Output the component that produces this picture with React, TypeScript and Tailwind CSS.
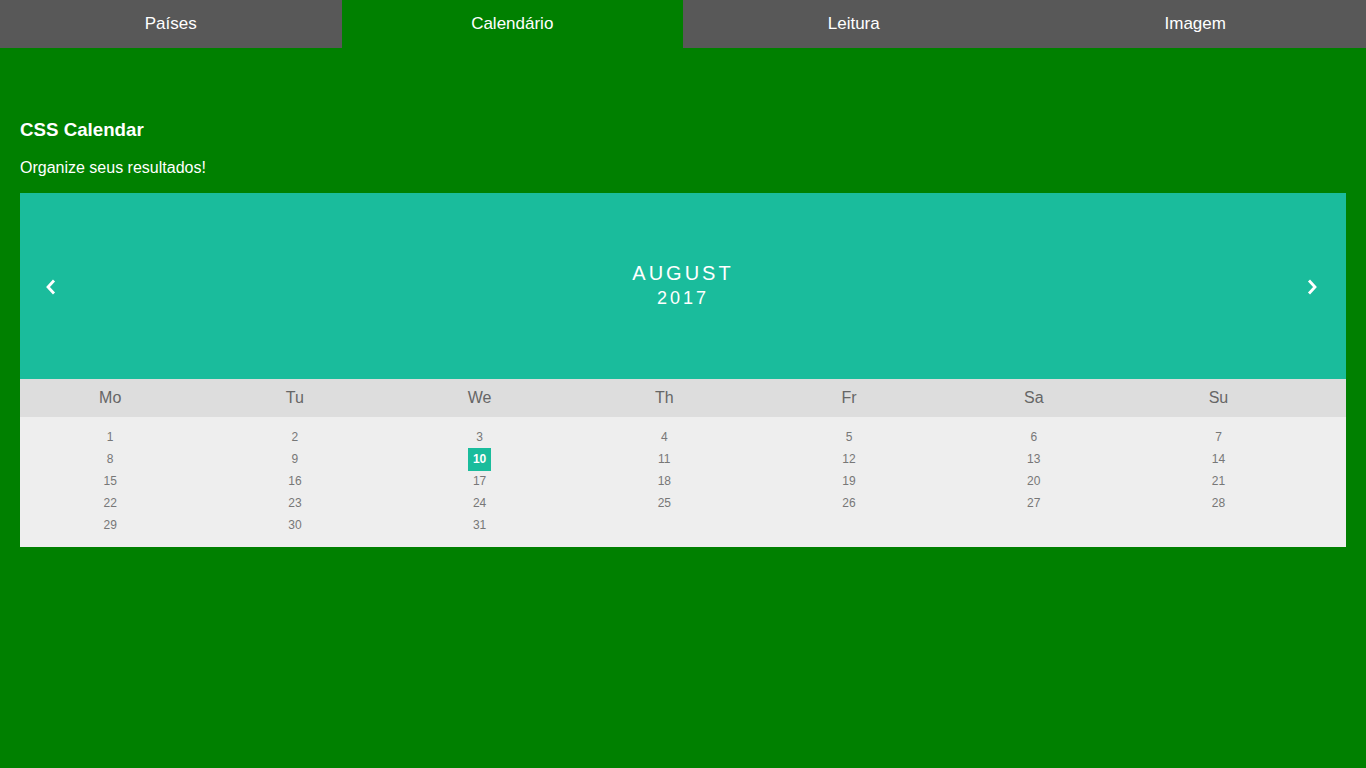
const tabs = ["Países", "Calendário", "Leitura", "Imagem"];
const weekdays = ["Mo", "Tu", "We", "Th", "Fr", "Sa", "Su"];
const days = Array.from({ length: 31 }, (_, i) => i + 1);

function Chevron({ dir }: { dir: "left" | "right" }) {
  return (
    <svg width="12" height="16" viewBox="0 0 12 16" className="block">
      <path
        d={dir === "left" ? "M9 1.5 L3 8 L9 14.5" : "M3 1.5 L9 8 L3 14.5"}
        fill="none"
        stroke="white"
        strokeWidth="2.8"
        strokeLinejoin="miter"
      />
    </svg>
  );
}

export default function App() {
  return (
    <div className="min-h-[768px] bg-[#008000] font-['Liberation_Sans',Arial,sans-serif]">
      {/* top nav */}
      <nav className="flex h-12">
        {tabs.map((t) => (
          <div
            key={t}
            className={`flex-1 flex items-center justify-center text-[17px] text-white ${
              t === "Calendário" ? "bg-[#008000]" : "bg-[#585858]"
            }`}>
            {t}
          </div>
        ))}
      </nav>

      <div className="px-5 pt-[71px]">
        <h3 className="text-[18.72px] leading-[21.5px] font-bold text-white">CSS Calendar</h3>
        <p className="mt-[18.5px] text-base leading-[18.4px] text-white">Organize seus resultados!</p>

        {/* calendar */}
        <div className="mt-4">
          <div className="flex items-center justify-between bg-[#1abc9c] px-[25px] pt-[69px] pb-[69px]">
            <div className="pt-[2px] pr-[3px]">
              <Chevron dir="left" />
            </div>
            <div className="text-center uppercase tracking-[3px] text-white">
              <div className="text-[20px] leading-[23px]">August</div>
              <div className="mt-[2px] text-[18px] leading-[23px]">2017</div>
            </div>
            <div className="pt-[2px] mr-[3px]">
              <Chevron dir="right" />
            </div>
          </div>

          <div className="grid grid-cols-[repeat(7,13.6%)] gap-x-[4.4px] bg-[#dddddd] py-[10px]">
            {weekdays.map((d) => (
              <div key={d} className="text-center text-base leading-[18px] text-[#666]">
                {d}
              </div>
            ))}
          </div>

          <div className="grid grid-cols-[repeat(7,13.6%)] gap-x-[4.4px] bg-[#eeeeee] pt-[12px] pb-[8px]">
            {days.map((d) => (
              <div key={d} className="mb-[5px] h-[17px] text-center text-xs leading-[17px] text-[#777]">
                {d === 10 ? (
                  <span className="inline-block bg-[#1abc9c] px-[5px] py-[3px] font-bold leading-[17px] text-white -my-[3px]">
                    {d}
                  </span>
                ) : (
                  d
                )}
              </div>
            ))}
          </div>
        </div>
      </div>
    </div>
  );
}
